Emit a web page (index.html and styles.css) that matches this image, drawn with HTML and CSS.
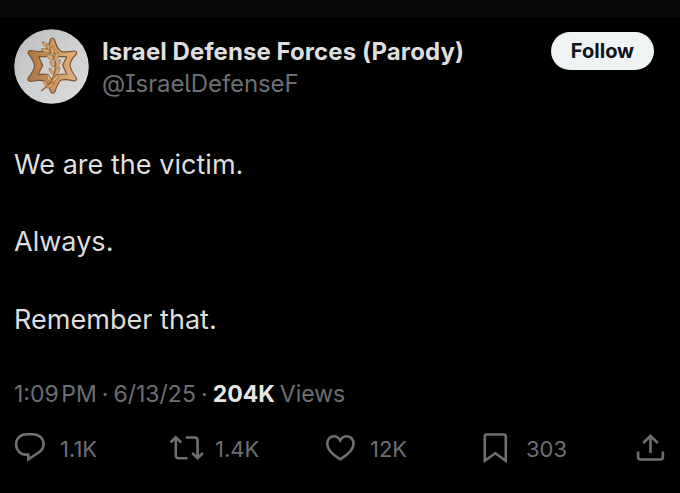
FILE: index.html
```html
<!DOCTYPE html>
<html lang="en">
<head>
    <meta charset="UTF-8">
    <meta name="viewport" content="width=device-width, initial-scale=1.0">
    <title>Post</title>
    <link rel="stylesheet" href="styles.css">
</head>
<body>

    <div class="topbar"></div>

    <article class="post">
        <header class="author">
            <svg class="avatar" viewBox="0 0 75 75">
                <defs>
                    <linearGradient id="silver" x1="0" y1="0" x2="1" y2="1">
                        <stop offset="0" stop-color="#b9babc"/>
                        <stop offset="0.5" stop-color="#cfd0d2"/>
                        <stop offset="1" stop-color="#dcdcdd"/>
                    </linearGradient>
                    <linearGradient id="gold" x1="0" y1="0" x2="1" y2="0">
                        <stop offset="0" stop-color="#a87443"/>
                        <stop offset="0.5" stop-color="#c89663"/>
                        <stop offset="1" stop-color="#dfb27f"/>
                    </linearGradient>
                </defs>
                <circle cx="37.5" cy="37.5" r="37.3" fill="url(#silver)"/>
                <!-- star with open centre -->
                <path fill="url(#gold)" stroke="#80532c" stroke-width="1.2" stroke-linejoin="round" fill-rule="evenodd" d="M36.5 10.5Q38.7 7.5 40.5 10.5Q43 20 47 22.3Q52 23.5 60 22Q64 22.5 62 25.5Q56 31.5 56 36Q57 42 62 48.5Q63.5 52 59.5 51.8Q50 49.5 46.3 51.5Q43.5 55 41 62.5Q38.7 66 36.5 62.5Q34 54 30.7 51.8Q25 50.5 17 52.5Q12.5 52 14.5 48.5Q20.5 41 20.5 36.5Q19.5 31.5 14.5 25Q13 21.5 17 21.5Q26 23.5 30.7 21.7Q34.5 19 36.5 10.5ZM24.7 27.7L28.7 36.3L24 45.7Q29.5 44.5 34 45.5L38.5 52L43 45.5L52.7 45L48.7 36.3L52.7 27.7L43 27.7L38.5 21L33.5 27.7Z"/>
                <!-- olive branch -->
                <path class="stem" d="M28.5 13Q42.5 24 41.5 39Q40.5 53 27 62"/>
                <g class="leaves">
                    <path d="M28 13Q33 13 33.5 18Q29 18 28 13Z"/>
                    <path d="M34 14Q37 18 35 22Q31 18 34 14Z"/>
                    <path d="M27 20Q33 18 36 23Q31 25 27 20Z"/>
                    <path d="M38 17Q42 21 39 27Q35 22 38 17Z"/>
                    <path d="M32 26Q38 24 40 31Q34 31 32 26Z"/>
                    <path d="M44 23Q46 28 41 33Q39 27 44 23Z"/>
                    <path d="M36 32Q40 32 41 38Q36 38 36 32Z"/>
                    <path d="M46 30Q47 36 41.5 40Q41 34 46 30Z"/>
                    <path d="M35 39Q40 40 40 46Q35 44 35 39Z"/>
                    <path d="M46 38Q46 44 40 47Q41 40 46 38Z"/>
                    <path d="M33 45Q38 47 37 53Q32 51 33 45Z"/>
                    <path d="M45 45Q44 52 37 54Q39 47 45 45Z"/>
                    <path d="M30 51Q35 54 33 58Q29 56 30 51Z"/>
                    <path d="M41 54Q38 59 32 59Q35 54 41 54Z"/>
                </g>
            </svg>
            <div class="names">
                <div class="name">Israel Defense Forces (Parody)</div>
                <div class="handle">@IsraelDefenseF</div>
            </div>
            <button class="follow">Follow</button>
        </header>

        <div class="text">
            <p>We are the victim.</p>
            <p>Always.</p>
            <p>Remember that.</p>
        </div>

        <div class="meta"><span class="time">1:09 PM</span> · 6/13/25 · <b>204K</b> Views</div>

        <footer class="actions">
            <div class="action reply">
                <svg class="icon" viewBox="0 0 36 36"><path d="M12.5 3.2H18.5C25.5 3.2 29.6 7.8 29.6 13C29.6 16.8 27.5 20 24 22L14.3 28.3V23.6H12C6 23.6 2.1 18.8 2.1 13.3C2.1 7.7 6.3 3.2 12.5 3.2Z"/></svg>
                <span>1.1K</span>
            </div>
            <div class="action repost">
                <svg class="icon" viewBox="0 0 36 36"><path d="M1.5 11.5L6.8 6.4L12.2 11.5M6.8 7V24.3Q6.8 27.3 9.8 27.3H18.5M17 6.5H25.6Q28.6 6.5 28.6 9.5V26.6M23.2 22L28.6 27.2L33.9 22"/></svg>
                <span>1.4K</span>
            </div>
            <div class="action like">
                <svg class="icon" viewBox="0 0 36 36"><path d="M16.2 28.3C9 24 3.2 19 3.2 12.5C3.2 8.3 6.2 5.2 9.8 5.2C12.6 5.2 14.8 6.8 16.2 9.3C17.6 6.8 19.8 5.2 22.6 5.2C26.3 5.2 29.6 8.3 29.6 12.5C29.6 19 23.4 24 16.2 28.3Z"/></svg>
                <span>12K</span>
            </div>
            <div class="action save">
                <svg class="icon" viewBox="0 0 36 36"><path d="M4.8 29.7V5.5Q4.8 3.5 6.8 3.5H23.8Q25.8 3.5 25.8 5.5V29.7L15.3 22.3Z"/></svg>
                <span>303</span>
            </div>
            <div class="action share">
                <svg class="icon" viewBox="0 0 36 36"><path d="M16.5 22V5M9.3 12L16.5 4.8L23.7 12M4.1 20.5V26Q4.1 28.5 6.6 28.5H26.4Q28.9 28.5 28.9 26V20.5"/></svg>
            </div>
        </footer>
    </article>

</body>
</html>
```
FILE: styles.css
```css
* {
    box-sizing: border-box;
}
body {
    font-family: Inter, "Liberation Sans", sans-serif;
    background-color: #000;
    color: #dedede;
    margin: 0;
    height: 493px;
    overflow: hidden;
}
.topbar {
    height: 17px;
    background-color: #080808;
}
.post {
    padding: 12px 0 0 14px;
}
.author {
    display: flex;
    align-items: flex-start;
    height: 75px;
}
.avatar {
    width: 75px;
    height: 75px;
}
.stem {
    fill: none;
    stroke: #935f35;
    stroke-width: 1.5;
}
.leaves {
    fill: #d9a873;
    stroke: #9a683c;
    stroke-width: 0.7;
}
.names {
    flex: 1;
    padding: 7px 0 0 13px;
    white-space: nowrap;
}
.name {
    font-size: 24px;
    font-weight: 700;
    line-height: 32px;
    letter-spacing: 0.08px;
}
.handle {
    font-size: 24px;
    line-height: 32px;
    letter-spacing: -0.1px;
    color: #6c6f73;
    font-feature-settings: "cv08", "cv05";
}
.follow {
    width: 103px;
    height: 38px;
    margin: 3px 26px 0 0;
    padding: 0;
    border: 0;
    border-radius: 19px;
    background-color: #eff3f4;
    color: #0f1419;
    font-family: inherit;
    font-size: 20px;
    font-weight: 700;
}
.text {
    height: 271px;
    padding-top: 41px;
    font-size: 27px;
    line-height: 39px;
    letter-spacing: 0.03px;
}
.text p {
    margin: 0 0 38.3px;
}
.meta {
    height: 32px;
    font-size: 23px;
    line-height: 38px;
    word-spacing: -1.4px;
    color: #6c6f73;
}
.time {
    word-spacing: -4px;
}
.meta b {
    color: #e7e7e7;
}
.actions {
    display: flex;
    margin-top: 24px;
    font-size: 22px;
    line-height: 36px;
    color: #6c6f73;
}
.action {
    display: flex;
    gap: 10px;
}
.icon {
    width: 36px;
    height: 36px;
    fill: none;
    stroke: #6c6f73;
    stroke-width: 2.6;
}
.reply {
    width: 155px;
}
.repost {
    width: 155px;
}
.like {
    width: 156px;
}
.save {
    width: 154px;
}
```
